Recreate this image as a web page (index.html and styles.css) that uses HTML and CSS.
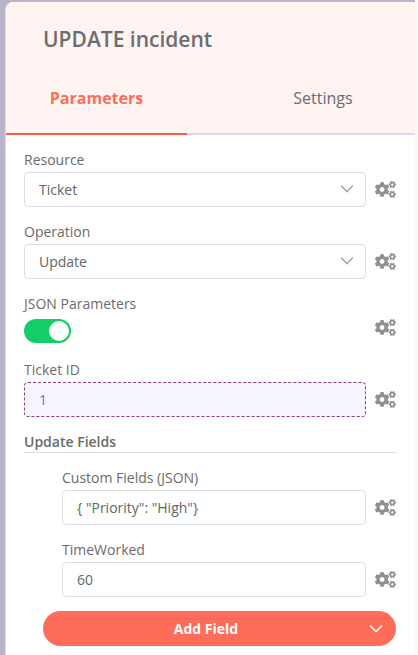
FILE: index.html
```html
<!DOCTYPE html>
<html lang="en">
<head>
<meta charset="utf-8">
<meta name="viewport" content="width=device-width, initial-scale=1">
<title>UPDATE incident</title>
<link rel="stylesheet" href="styles.css">
</head>
<body>
<svg class="defs" aria-hidden="true">
  <symbol id="cogs" viewBox="0 0 640 512">
    <path id="cog-small" fill-rule="evenodd" d="M512.1 191l-8.2 14.3c-3 5.3-9.4 7.5-15.1 5.4-11.8-4.4-22.6-10.7-32.1-18.6-4.6-3.8-5.8-10.5-2.8-15.7l8.2-14.3c-6.9-8-12.3-17.3-15.9-27.4h-16.5c-6 0-11.2-4.3-12.2-10.3-2-12-2.1-24.6 0-37.1 1-6 6.2-10.4 12.2-10.4h16.5c3.6-10.1 9-19.4 15.9-27.4l-8.2-14.3c-3-5.2-1.9-11.9 2.8-15.7 9.5-7.9 20.4-14.2 32.1-18.6 5.7-2.1 12.1.1 15.1 5.4l8.2 14.3c10.5-1.9 21.2-1.9 31.7 0L552 6.3c3-5.3 9.4-7.5 15.1-5.4 11.8 4.4 22.6 10.7 32.1 18.6 4.6 3.8 5.8 10.5 2.8 15.7l-8.2 14.3c6.9 8 12.3 17.3 15.9 27.4h16.5c6 0 11.2 4.3 12.2 10.3 2 12 2.1 24.6 0 37.1-1 6-6.2 10.4-12.2 10.4h-16.5c-3.6 10.1-9 19.4-15.9 27.4l8.2 14.3c3 5.2 1.9 11.9-2.8 15.7-9.5 7.9-20.4 14.2-32.1 18.6-5.7 2.1-12.1-.1-15.1-5.4l-8.2-14.3c-10.4 1.9-21.2 1.9-31.7 0zm-10.5-58.8c38.5 29.6 82.4-14.3 52.8-52.8-38.5-29.7-82.4 14.3-52.8 52.8z"/>
    <use href="#cog-small" y="299"/>
    <path fill-rule="evenodd" d="M386.3 286.1l33.7 16.8c10.1 5.8 14.5 18.1 10.5 29.1-8.9 24.2-26.4 46.4-42.6 65.8-7.4 8.9-20.2 11.1-30.3 5.3l-29.1-16.8c-16 13.7-34.6 24.6-54.9 31.7v33.6c0 11.6-8.3 21.6-19.7 23.6-24.6 4.2-50.4 4.4-75.9 0-11.5-2-20-11.9-20-23.6V418c-20.3-7.2-38.9-18-54.9-31.7L74 403c-10 5.8-22.9 3.6-30.3-5.3-16.2-19.4-33.3-41.6-42.2-65.7-4-10.9.4-23.2 10.5-29.1l33.3-16.8c-3.9-20.9-3.9-42.4 0-63.4L12 205.8c-10.1-5.8-14.6-18.1-10.5-29 8.9-24.2 26-46.4 42.2-65.8 7.4-8.9 20.2-11.1 30.3-5.3l29.1 16.8c16-13.7 34.6-24.6 54.9-31.7V57.1c0-11.5 8.2-21.5 19.6-23.5 24.6-4.2 50.5-4.4 76-.1 11.5 2 20 11.9 20 23.6v33.6c20.3 7.2 38.9 18 54.9 31.7l29.1-16.8c10-5.8 22.9-3.6 30.3 5.3 16.2 19.4 33.2 41.6 42.1 65.8 4 10.9.1 23.2-10 29.1l-33.7 16.8c3.9 21 3.9 42.5 0 63.5zm-117.6 21.1c59.2-77-28.7-164.9-105.7-105.7-59.2 77 28.7 164.9 105.7 105.7z"/>
  </symbol>
  <symbol id="chevron" viewBox="0 0 14 14">
    <path d="M1.5 4L7 9.8 12.5 4" fill="none" stroke="currentColor" stroke-width="1.4" stroke-linecap="round" stroke-linejoin="round"/>
  </symbol>
</svg>
<main class="panel">
  <header class="head">
    <h1 class="title">UPDATE incident</h1>
    <nav class="tabs">
      <a class="tab active" href="#parameters">Parameters</a>
      <a class="tab" href="#settings">Settings</a>
    </nav>
  </header>
  <form class="form" id="parameters">
    <div class="row">
      <div class="field">
        <label for="resource">Resource</label>
        <div class="select">
          <select class="control" id="resource"><option>Ticket</option></select>
          <svg class="arrow" aria-hidden="true"><use href="#chevron"/></svg>
        </div>
      </div>
      <button class="options" type="button" aria-label="Resource options"><svg><use href="#cogs"/></svg></button>
    </div>
    <div class="row">
      <div class="field">
        <label for="operation">Operation</label>
        <div class="select">
          <select class="control" id="operation"><option>Update</option></select>
          <svg class="arrow" aria-hidden="true"><use href="#chevron"/></svg>
        </div>
      </div>
      <button class="options" type="button" aria-label="Operation options"><svg><use href="#cogs"/></svg></button>
    </div>
    <div class="row">
      <div class="field toggle">
        <label for="json">JSON Parameters</label>
        <input class="switch" id="json" type="checkbox" role="switch" checked>
      </div>
      <button class="options" type="button" aria-label="JSON Parameters options"><svg><use href="#cogs"/></svg></button>
    </div>
    <div class="row">
      <div class="field">
        <label for="ticket">Ticket ID</label>
        <input class="control expression" id="ticket" type="text" value="1">
      </div>
      <button class="options" type="button" aria-label="Ticket ID options"><svg><use href="#cogs"/></svg></button>
    </div>
    <h2 class="section">Update Fields</h2>
    <div class="nested">
      <div class="row">
        <div class="field">
          <label for="custom">Custom Fields (JSON)</label>
          <input class="control" id="custom" type="text" value="{ &quot;Priority&quot;: &quot;High&quot;}">
        </div>
        <button class="options" type="button" aria-label="Custom Fields options"><svg><use href="#cogs"/></svg></button>
      </div>
      <div class="row">
        <div class="field">
          <label for="time">TimeWorked</label>
          <input class="control" id="time" type="text" value="60">
        </div>
        <button class="options" type="button" aria-label="TimeWorked options"><svg><use href="#cogs"/></svg></button>
      </div>
    </div>
    <button class="add" type="button"><span>Add Field</span><svg aria-hidden="true"><use href="#chevron"/></svg></button>
  </form>
</main>
</body>
</html>
```
FILE: styles.css
```css
* {
  box-sizing: border-box;
}

body {
  margin: 0;
  min-height: 100vh;
  display: flex;
  padding-top: 2px;
  background: linear-gradient(to right, #b9b5c8 50%, #f9f9fa 50%);
  border-left: 5px solid #b9b5c8;
  border-right: 3px solid #f9f9fa;
  box-shadow: inset 0 2px #b9b5c8;
  font-family: "Open Sans", sans-serif;
  font-size: 14px;
  color: #6b6b6b;
}

.defs {
  position: absolute;
  width: 0;
  height: 0;
}

.panel {
  flex: 1;
  min-width: 0;
  background: #fff;
  border-left: 1px solid #dcdbe6;
  border-top-left-radius: 8px;
  overflow: hidden;
}

.head {
  background: #fff4f2;
}

.title {
  margin: 0;
  padding: 22px 37px 0;
  font-size: 21px;
  line-height: 30px;
  font-weight: 600;
  color: #6b6d6e;
}

.tabs {
  display: flex;
  margin-top: 8px;
  border-bottom: 2px solid #d9dce8;
}

.tab {
  flex: 1;
  height: 73px;
  margin-bottom: -2px;
  padding-left: 44px;
  line-height: 72px;
  font-size: 16px;
  text-align: center;
  text-decoration: none;
  color: #6b6b6b;
}

.tab.active {
  flex: 0 0 181px;
  padding-left: 0;
  border-bottom: 2px solid #ff5a46;
  font-weight: 700;
  color: #ff6d5a;
}

.form {
  padding: 14px 19px 8px 18px;
}

.row {
  display: flex;
  align-items: flex-end;
  gap: 9px;
  margin-bottom: 14px;
}

.field {
  flex: 1;
  min-width: 0;
}

label {
  display: block;
  height: 23px;
  line-height: 22px;
}

.select {
  position: relative;
}

.control {
  display: block;
  width: 100%;
  height: 35px;
  padding: 0 14px;
  appearance: none;
  border: 1px solid #dcdde8;
  border-radius: 4px;
  background: #fff;
  font: inherit;
  color: #636566;
}

.expression {
  border: 1px dashed #8f4079;
  background: #f6f4ff;
  color: #7b7b80;
}

.arrow {
  position: absolute;
  right: 12px;
  top: 10px;
  width: 14px;
  height: 14px;
  color: #a0a0a4;
  pointer-events: none;
}

.options {
  display: flex;
  align-items: center;
  height: 35px;
  padding: 0;
  border: 0;
  background: none;
}

.options svg {
  width: 21px;
  height: 17px;
  fill: #909090;
}

.toggle {
  padding-bottom: 2px;
}

.switch {
  display: flex;
  align-items: center;
  justify-content: flex-end;
  width: 47px;
  height: 24px;
  margin: 3px 0 0;
  padding: 2px;
  appearance: none;
  border-radius: 12px;
  background: #13ce66;
}

.switch::before {
  content: "";
  width: 20px;
  height: 20px;
  border-radius: 50%;
  background: #fff;
}

.section {
  margin: 0 0 14px;
  height: 22px;
  border-bottom: 1px solid #d5dee8;
  line-height: 22px;
  font-size: 14px;
  font-weight: 600;
}

.nested {
  padding-left: 38px;
}

.add {
  display: flex;
  align-items: center;
  width: calc(100% - 19px);
  height: 35px;
  margin-left: 19px;
  padding: 0 13px 0 0;
  border: 0;
  border-radius: 18px;
  background: #ff6d5a;
  color: #fff;
  font: inherit;
  font-weight: 700;
}

.add span {
  flex: 1;
}

.add svg {
  width: 14px;
  height: 14px;
}
```
